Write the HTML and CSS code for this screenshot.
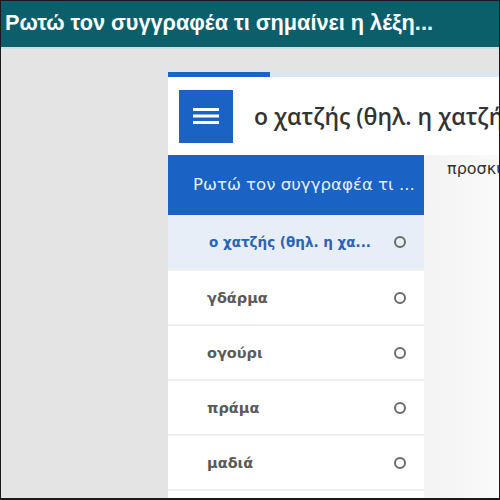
FILE: index.html
```html
<!DOCTYPE html>
<html lang="el">
<head>
<meta charset="utf-8">
<link rel="stylesheet" href="styles.css">
</head>
<body>
<div class="frame">
  <div class="topbar">Ρωτώ τον συγγραφέα τι σημαίνει η λέξη...</div>
  <div class="stage">
    <div class="card">
      <div class="progress"><div class="fill"></div></div>
      <div class="head">
        <div class="menu-btn">
          <svg width="26" height="18" viewBox="0 0 26 18"><rect x="0" y="1" width="26" height="3" fill="#fff"/><rect x="0" y="7.5" width="26" height="3" fill="#fff"/><rect x="0" y="14" width="26" height="3" fill="#fff"/></svg>
        </div>
        <div class="title">ο χατζής (θηλ. η χατζήνα)</div>
      </div>
      <div class="body">
        <div class="sidebar">
          <div class="side-head">Ρωτώ τον συγγραφέα τι ...</div>
          <div class="item active"><span class="label">ο χατζής (θηλ. η χα...</span><span class="dot"></span></div>
          <div class="item"><span class="label">γδάρμα</span><span class="dot"></span></div>
          <div class="item"><span class="label">ογούρι</span><span class="dot"></span></div>
          <div class="item"><span class="label">πράμα</span><span class="dot"></span></div>
          <div class="item"><span class="label">μαδιά</span><span class="dot"></span></div>
          <div class="item"><span class="label">λέξη</span><span class="dot"></span></div>
        </div>
        <div class="content">
          <p class="text">προσκύνημα</p>
        </div>
      </div>
    </div>
  </div>
</div>
</body>
</html>
```

FILE: styles.css
```css
html, body {
  margin: 0;
  padding: 0;
  background: #e4e4e4;
}
.frame {
  box-sizing: border-box;
  width: 500px;
  height: 500px;
  border: 1px solid #1a1a1a;
  border-bottom-width: 2px;
  overflow: hidden;
  background: #e4e4e4;
  display: flex;
  flex-direction: column;
}
.topbar {
  height: 46px;
  line-height: 43px;
  background: #0a5f6b;
  border-bottom: 2px solid #c6e2e5;
  color: #fff;
  font-family: "Liberation Sans", Arial, sans-serif;
  font-weight: bold;
  font-size: 21.7px;
  padding-left: 4px;
  white-space: nowrap;
  flex: none;
}
.stage {
  flex: 1;
  display: flex;
  padding: 23px 0 0 167px;
  min-height: 0;
}
.card {
  flex: 1;
  min-width: 0;
  background: #fff;
  display: flex;
  flex-direction: column;
  overflow: hidden;
}
.progress {
  height: 5px;
  background: #dbe6f3;
  flex: none;
}
.progress .fill {
  width: 102px;
  height: 100%;
  background: #1e62c2;
}
.head {
  height: 78px;
  display: flex;
  align-items: center;
  padding-left: 11px;
  flex: none;
  white-space: nowrap;
}
.menu-btn {
  width: 54px;
  height: 53px;
  background: #1a62c3;
  display: flex;
  align-items: center;
  justify-content: center;
  flex: none;
}
.title {
  margin-left: 21px;
  font-family: "Open Sans", "Noto Sans", sans-serif;
  font-weight: 600;
  font-size: 23px;
  color: #333;
}
.body {
  flex: 1;
  display: flex;
  min-height: 0;
}
.sidebar {
  width: 256px;
  flex: none;
  font-family: "DejaVu Sans", Verdana, sans-serif;
}
.side-head {
  height: 60px;
  line-height: 60px;
  background: #1a62c3;
  color: #e6effa;
  font-size: 16.6px;
  padding-left: 25px;
  white-space: nowrap;
}
.item {
  height: 53px;
  border-top: 2px solid #f0f0f0;
  display: flex;
  align-items: center;
  padding: 0 18px 0 39px;
  background: #fff;
}
.item.active {
  height: 54px;
  border-top: none;
  background: #e7eef8;
  padding-left: 41px;
}
.label {
  flex: 1;
  font-weight: bold;
  font-size: 14.5px;
  color: #5a5a5a;
  white-space: nowrap;
}
.item.active .label {
  color: #2a63b8;
  font-size: 13.5px;
}
.dot {
  width: 8px;
  height: 8px;
  border: 2px solid #6a6a6a;
  border-radius: 50%;
  flex: none;
}
.content {
  flex: 1;
  min-width: 0;
  background: linear-gradient(to right, #f3f3f3, #fafafa);
  padding: 0 0 0 23px;
  overflow: hidden;
}
.text {
  margin: 4px 0 0;
  font-family: "DejaVu Sans", Verdana, sans-serif;
  font-size: 16px;
  color: #333;
  white-space: nowrap;
}
```
